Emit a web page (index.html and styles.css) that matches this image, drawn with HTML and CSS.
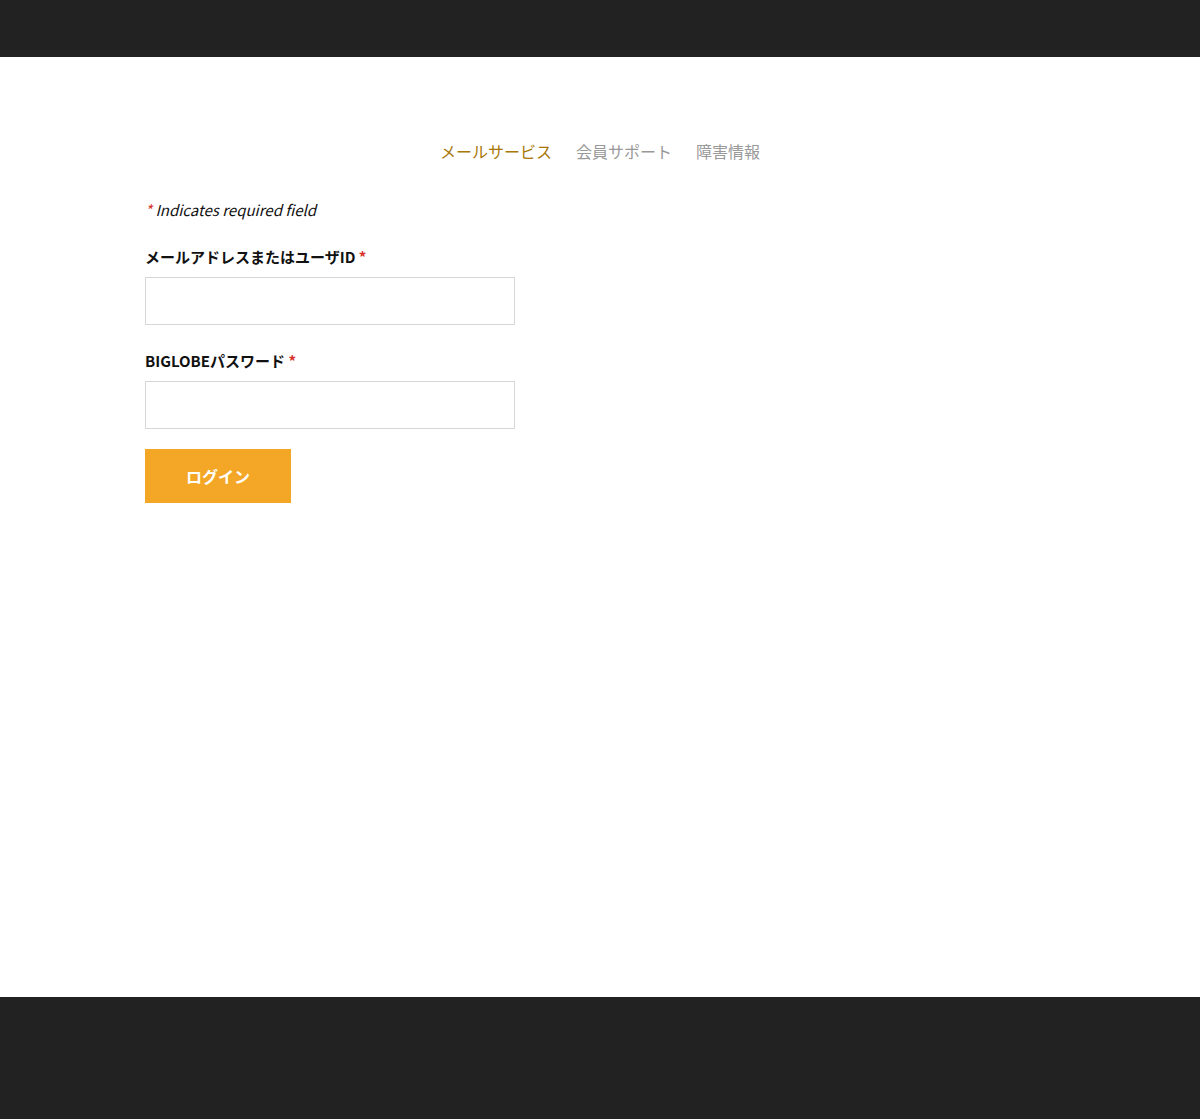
FILE: index.html
```html
<!DOCTYPE html>
<html lang="ja">
<head>
<meta charset="UTF-8">
<meta name="viewport" content="width=device-width, initial-scale=1.0">
<title>BIGLOBE ログイン</title>
<link rel="stylesheet" href="styles.css">
</head>
<body>
<div class="page">
    <div class="header"></div>
    <div class="main">
        <div class="nav">
            <a class="nav-item active" href="#">メールサービス</a>
            <a class="nav-item" href="#">会員サポート</a>
            <a class="nav-item" href="#">障害情報</a>
        </div>
        <form class="login-form">
            <p class="note"><span class="req">*</span> Indicates required field</p>
            <label class="label" for="userId">メールアドレスまたはユーザID <span class="req">*</span></label>
            <input class="field" type="text" id="userId">
            <label class="label" for="password">BIGLOBEパスワード <span class="req">*</span></label>
            <input class="field" type="password" id="password">
            <button class="button" type="button">ログイン</button>
        </form>
    </div>
    <div class="footer"></div>
</div>
</body>
</html>
```

FILE: styles.css
```css
body {
    font-family: "Noto Sans CJK JP", "Noto Sans", sans-serif;
    background-color: #ffffff;
    margin: 0;
    padding: 0;
    color: #111111;
}

.page {
    display: flex;
    flex-direction: column;
    min-height: 100vh;
}

.header {
    height: 57px;
    background-color: #222222;
}

.main {
    flex-grow: 1;
    padding: 0 145px;
}

.nav {
    display: flex;
    justify-content: center;
    gap: 24px;
    margin-top: 82px;
    font-size: 16px;
    line-height: 24px;
}

.nav-item {
    color: #999999;
    text-decoration: none;
}

.nav-item.active {
    color: #a87707;
}

.login-form {
    display: flex;
    flex-direction: column;
    align-items: flex-start;
    margin-top: 35px;
}

.note {
    margin: 0;
    font-size: 15px;
    line-height: 24px;
    font-style: italic;
}

.req {
    color: #d9302a;
}

.label {
    margin-top: 23px;
    font-size: 15px;
    line-height: 24px;
    font-weight: bold;
}

.field {
    box-sizing: border-box;
    width: 370px;
    height: 48px;
    margin-top: 8px;
    margin-bottom: 16px;
    border: 1px solid #d6d6d6;
    font-size: 16px;
    padding: 0 10px;
}

.field + .label {
    margin-top: 8px;
}

.button {
    width: 146px;
    height: 54px;
    margin-top: 4px;
    background-color: #f4a727;
    color: #ffffff;
    border: none;
    font-family: inherit;
    font-size: 16px;
    font-weight: bold;
    cursor: pointer;
}

.footer {
    height: 122px;
    background-color: #222222;
}
```
